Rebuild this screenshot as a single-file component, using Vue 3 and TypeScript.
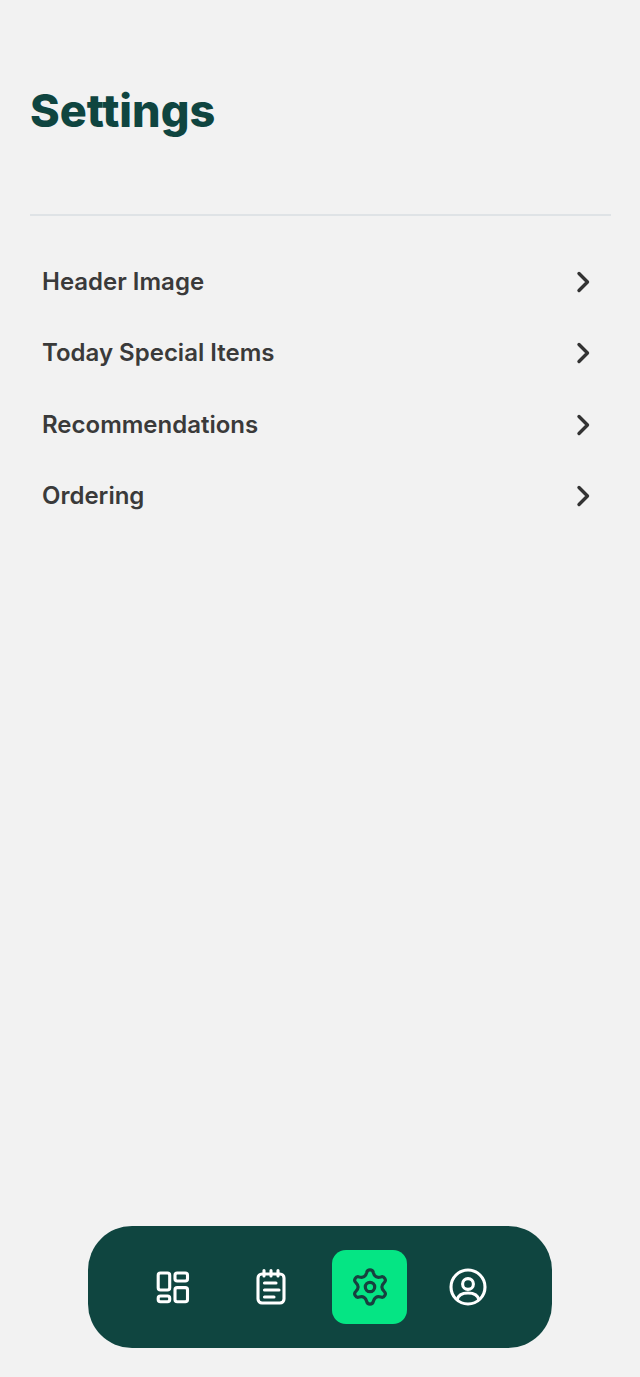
<script setup lang="ts">
const rows = ['Header Image', 'Today Special Items', 'Recommendations', 'Ordering']

// six rounded lobes around the centre of a 40x40 box
function gearPath(): string {
  const cx = 20
  const cy = 20
  const outer = 14.8
  const valley = 9.6
  const spread = 13
  const at = (deg: number, r: number) => {
    const a = (deg * Math.PI) / 180
    return `${(cx + r * Math.cos(a)).toFixed(2)} ${(cy + r * Math.sin(a)).toFixed(2)}`
  }
  let d = ''
  for (let i = 0; i < 6; i++) {
    const mid = -90 + i * 60
    d += i === 0 ? `M${at(mid - spread, outer)}` : ''
    d += `A3.4 3.4 0 0 1 ${at(mid + spread, outer)}`
    d += `Q${at(mid + 30, valley)} ${at(mid + 60 - spread, outer)}`
  }
  return d + 'Z'
}

const gear = gearPath()
</script>

<template>
  <div class="page">
    <h1 class="title">Settings</h1>
    <div class="divider"></div>

    <ul class="list">
      <li v-for="row in rows" :key="row" class="row">
        <span>{{ row }}</span>
        <svg class="chevron" viewBox="0 0 24 24" fill="none">
          <path d="M8 3.5L16.5 12L8 20.5" stroke="#333" stroke-width="3.4" stroke-linecap="round" stroke-linejoin="round" />
        </svg>
      </li>
    </ul>

    <nav class="nav">
      <div class="nav-item">
        <svg viewBox="0 0 40 40" fill="none" stroke="#fff" stroke-width="3.1">
          <rect x="5.2" y="6" width="11.5" height="17" rx="2.2" />
          <rect x="22" y="6" width="12.5" height="8" rx="2.2" />
          <rect x="5.2" y="29" width="11.5" height="5.8" rx="2.2" />
          <rect x="22" y="20.6" width="12.5" height="14.2" rx="2.2" />
        </svg>
      </div>
      <div class="nav-item">
        <svg viewBox="0 0 40 40" fill="none" stroke="#fff" stroke-width="3.1" stroke-linecap="round">
          <rect x="7" y="7" width="26" height="29" rx="4" />
          <path d="M13 3.5V9M20 3.5V9M27 3.5V9" />
          <path d="M13.5 16H25M13.5 23H28M13.5 30H23" />
        </svg>
      </div>
      <div class="nav-item active">
        <svg viewBox="0 0 40 40" fill="none" stroke="#17403f" stroke-width="3.2" stroke-linejoin="round">
          <path :d="gear" />
          <circle cx="20" cy="20" r="4.7" />
        </svg>
      </div>
      <div class="nav-item">
        <svg viewBox="0 0 40 40" fill="none" stroke="#fff" stroke-width="3.1">
          <circle cx="20" cy="20" r="17" />
          <circle cx="20" cy="17" r="5.4" />
          <path d="M9 33C10 28.5 14 26 20 26C26 26 30 28.5 31 33" />
        </svg>
      </div>
    </nav>
  </div>
</template>

<style scoped>
.page {
  display: flex;
  flex-direction: column;
  box-sizing: border-box;
  height: 1377px;
  padding: 81px 29px 29px 30px;
  background: #f2f2f2;
  font-family: Inter, 'Noto Sans', sans-serif;
}

.title {
  margin: 0;
  font-size: 45px;
  line-height: 60px;
  font-weight: 800;
  color: #0f4540;
}

.divider {
  height: 2px;
  margin-top: 73px;
  background: #dfe3e6;
}

.list {
  margin: 29.6px 0 0;
  padding: 0 10px 0 12px;
  list-style: none;
}

.row {
  display: flex;
  align-items: center;
  justify-content: space-between;
  height: 71.4px;
  font-size: 24px;
  font-weight: 600;
  color: #3a3a3a;
}

.chevron {
  width: 24px;
  height: 24px;
  margin: 1px 6px 0 0;
}

.nav {
  display: flex;
  align-items: center;
  justify-content: center;
  gap: 23.4px;
  align-self: center;
  box-sizing: border-box;
  width: 464px;
  height: 122px;
  margin-top: auto;
  margin-left: -1px;
  padding-left: 1px;
  border-radius: 44px;
  background: #0f4540;
}

.nav-item {
  display: flex;
  align-items: center;
  justify-content: center;
  width: 75px;
  height: 74px;
  border-radius: 14px;
}

.nav-item svg {
  width: 40px;
  height: 40px;
}

.active {
  background: #05e584;
}
</style>
